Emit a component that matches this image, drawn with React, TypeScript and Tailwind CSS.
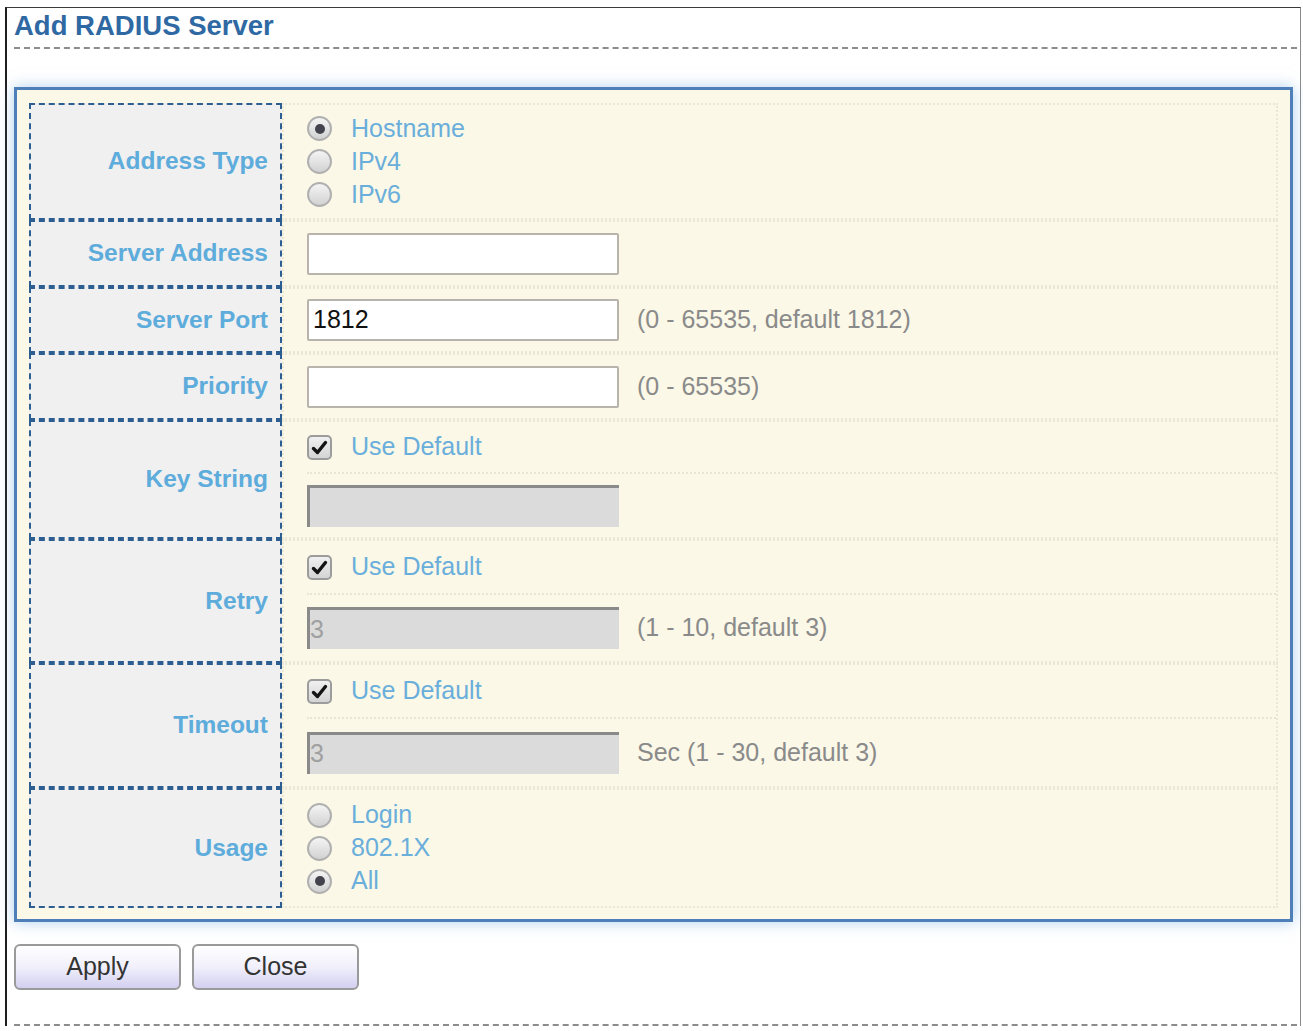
import type { ReactNode } from "react";

const font = { fontFamily: '"Liberation Sans", Arial, sans-serif' };

function Radio({ on = false }: { on?: boolean }) {
  return (
    <span className="flex h-[25px] w-[25px] shrink-0 items-center justify-center rounded-full border-2 border-[#b0b0b0] bg-gradient-to-b from-[#f4f4f4] to-[#d2d2d2]">
      {on && <span className="h-[10px] w-[10px] rounded-full bg-[#43434e]" />}
    </span>
  );
}

function Check() {
  return (
    <span className="flex h-[25px] w-[25px] shrink-0 items-center justify-center rounded-[5px] border-2 border-[#9c9c9c] bg-gradient-to-b from-[#f0f0f0] to-[#d4d4d4]">
      <svg width="17" height="15" viewBox="0 0 17 15">
        <path d="M2.5 8.5 L6.5 12.5 L14.5 2.5" fill="none" stroke="#141414" strokeWidth="3.4" strokeLinecap="round" strokeLinejoin="round" />
      </svg>
    </span>
  );
}

function Box({ value = "" }: { value?: string }) {
  return (
    <div className="flex h-[42px] w-[312px] items-center rounded-[2px] border-2 border-[#b8b4ac] bg-white pl-[4px] text-[25px] text-[#111]">
      {value}
    </div>
  );
}

function Disabled({ value = "" }: { value?: string }) {
  return (
    <div className="flex h-[42px] w-[312px] items-center border-t-[3px] border-l-[3px] border-[#8a8a8a] bg-[#dbdbdb] text-[25px] text-[#a0a0a0]">
      {value}
    </div>
  );
}

function Hint({ children }: { children: ReactNode }) {
  return <span className="ml-[18px] text-[25px] text-[#8a8a8a]">{children}</span>;
}

function Opt({ children }: { children: ReactNode }) {
  return <span className="ml-[19px] text-[25px] text-[#6aaedb]">{children}</span>;
}

function Options({ items, picked }: { items: string[]; picked: number }) {
  return (
    <div className="flex h-full flex-col justify-center">
      {items.map((t, i) => (
        <div key={t} className="flex h-[33px] items-center">
          <Radio on={i === picked} />
          <Opt>{t}</Opt>
        </div>
      ))}
    </div>
  );
}

// "Use Default" checkbox on top, greyed field below
function Defaulted({ top, value, hint }: { top: string; value?: string; hint?: string }) {
  return (
    <div className="flex h-full flex-col">
      <div className={`${top} flex items-center border-b-2 border-dotted border-[#e9e5d2]`}>
        <Check />
        <Opt>Use Default</Opt>
      </div>
      <div className="flex flex-1 items-center">
        <Disabled value={value} />
        {hint && <Hint>{hint}</Hint>}
      </div>
    </div>
  );
}

const rows: { label: string; h: string; body: ReactNode }[] = [
  { label: "Address Type", h: "h-[117px]", body: <Options items={["Hostname", "IPv4", "IPv6"]} picked={0} /> },
  { label: "Server Address", h: "h-[67px]", body: <div className="flex h-full items-center"><Box /></div> },
  {
    label: "Server Port",
    h: "h-[66px]",
    body: (
      <div className="flex h-full items-center">
        <Box value="1812" />
        <Hint>(0 - 65535, default 1812)</Hint>
      </div>
    ),
  },
  {
    label: "Priority",
    h: "h-[67px]",
    body: (
      <div className="flex h-full items-center">
        <Box />
        <Hint>(0 - 65535)</Hint>
      </div>
    ),
  },
  { label: "Key String", h: "h-[119px]", body: <Defaulted top="h-[52px]" /> },
  { label: "Retry", h: "h-[124px]", body: <Defaulted top="h-[54px]" value="3" hint="(1 - 10, default 3)" /> },
  { label: "Timeout", h: "h-[125px]", body: <Defaulted top="h-[54px]" value="3" hint="Sec (1 - 30, default 3)" /> },
  { label: "Usage", h: "h-[120px]", body: <Options items={["Login", "802.1X", "All"]} picked={2} /> },
];

function Btn({ children }: { children: ReactNode }) {
  return (
    <button className="flex h-[46px] w-[167px] items-center justify-center rounded-[6px] border-2 border-[#9a9a9a] bg-gradient-to-b from-white via-[#f1f0fb] to-[#d3cff0] text-[25px] text-[#333]">
      {children}
    </button>
  );
}

export default function App() {
  return (
    <div className="h-[1031px] w-[1303px] overflow-hidden bg-white pt-[7px] pl-[5px] pr-[2px]" style={font}>
      <div className="flex h-[1019px] flex-col border-t border-l-2 border-r border-t-[#3a3a3a] border-l-[#1e1e1e] border-r-[#8a8a8a] pl-[7px] pr-[3px]">
        <h1 className="h-[39px] text-[27.5px] leading-[36px] font-bold text-[#2f69a3]">Add RADIUS Server</h1>
        <div className="border-b-2 border-dashed border-[#8c8c8c]" />

        <div className="mt-[38px] mr-[4px] border-[3px] border-[#4e7fb8] bg-[#fbf8e7] pt-[13px] pr-[12px] pb-[11px] pl-[12px] shadow-[0_0_14px_rgba(110,170,225,0.55)]">
          {rows.map((r) => (
            <div key={r.label} className={`flex ${r.h}`}>
              <div className="flex w-[253px] shrink-0 items-center justify-end border-2 border-dashed border-[#2d5e92] bg-[#f0f0f0] pr-[12px] text-[24.5px] font-bold text-[#5eacdb]">
                {r.label}
              </div>
              <div className="flex-1 border-2 border-dotted border-[#ebe7d5] pl-[23px]">{r.body}</div>
            </div>
          ))}
        </div>

        <div className="mt-[22px] flex gap-[11px]">
          <Btn>Apply</Btn>
          <Btn>Close</Btn>
        </div>

        <div className="mt-auto border-b-2 border-dashed border-[#8c8c8c]" />
      </div>
    </div>
  );
}
